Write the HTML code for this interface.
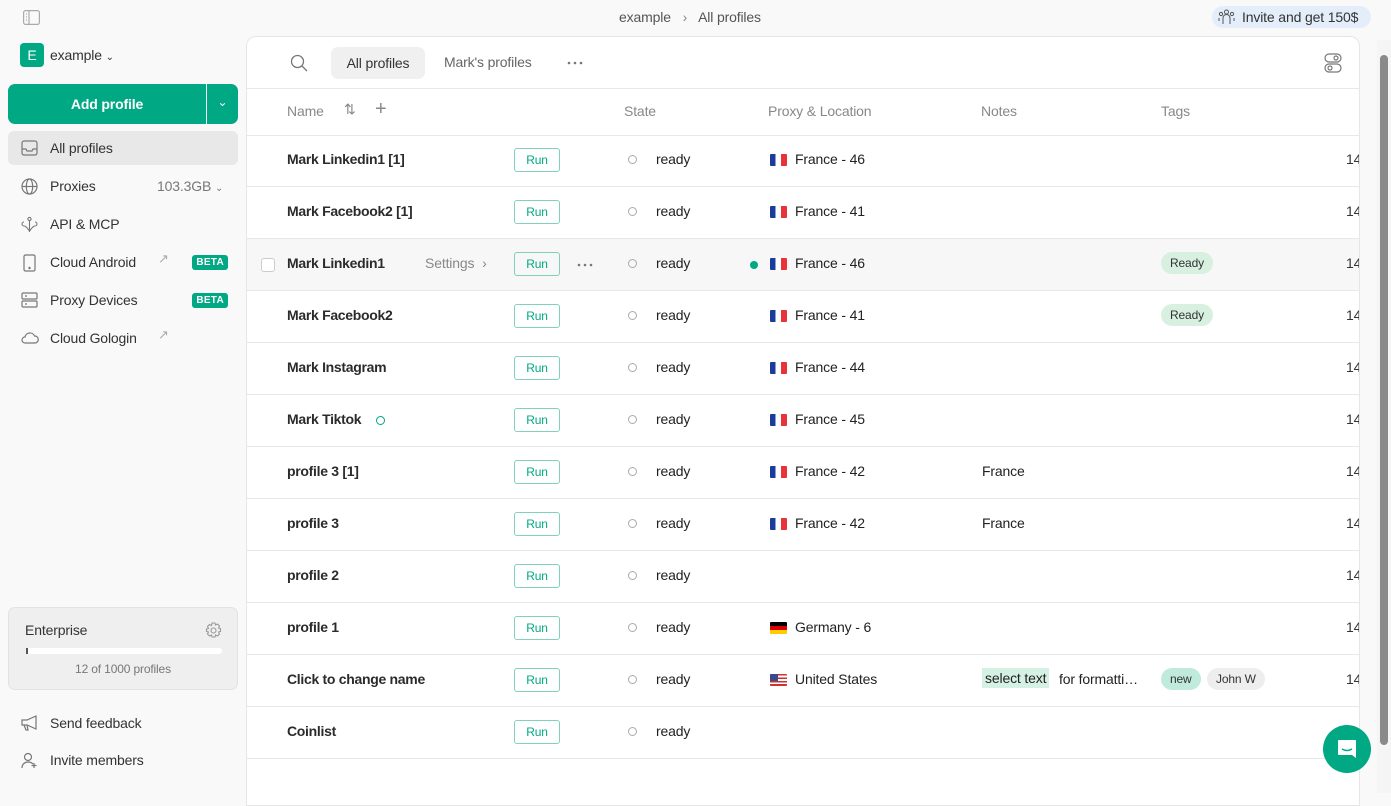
<!DOCTYPE html>
<html><head><meta charset="utf-8"><style>
*{box-sizing:border-box;margin:0;padding:0}
body{width:1391px;height:793px;overflow:hidden;background:#f9f9f9;font-family:"Liberation Sans",sans-serif;color:#222;position:relative;font-size:14px;letter-spacing:-0.15px}
.abs{position:absolute}
.nav{position:absolute;left:8px;width:230px;height:34px;border-radius:6px;display:flex;align-items:center;padding-left:42px;font-size:14px;color:#333}
.nav svg{position:absolute;left:13px;top:9px}
.beta{position:absolute;right:10px;top:10px;background:#00a884;color:#fff;font-size:10px;font-weight:bold;padding:2px 4px;border-radius:3px;letter-spacing:.3px}
.arr{position:absolute;left:150px;top:6px;color:#aaa;font-size:13px}
.panel{position:absolute;left:246px;top:36px;width:1114px;height:770px;background:#fff;border:1px solid #e6e6e6;border-radius:10px 10px 0 0;overflow:hidden}
.row{position:absolute;left:0;width:1114px;height:52px;border-bottom:1px solid #e8e8e8}
.row>*{position:absolute}
.nm{left:40px;top:16px;font-weight:bold;font-size:14px;color:#2b2b2b;letter-spacing:-0.3px}
.run{left:267px;top:13px;width:46px;height:24px;border:1px solid #7fd1bb;border-radius:3px;color:#00a884;font-size:12px;text-align:center;line-height:22px}
.sd{left:381px;top:20px;width:9px;height:9px;border:1px solid #aaa;border-radius:50%}
.rd{left:409px;top:16px}
.fl{left:523px;top:19px;width:17px;height:12px;border-radius:1px;overflow:hidden;display:flex}
.fr{background:linear-gradient(90deg,#1c3c9c 0 33%,#fff 33% 66%,#e8333a 66%)}
.loc{left:548px;top:16px}
.nt{left:735px;top:16px}
.n14{left:1099px;top:16px;color:#333}
.tag{top:13px;height:22px;border-radius:11px;font-size:12px;line-height:22px;padding:0 9px;background:#d8f0e0;color:#333}
</style></head><body>
<svg class="abs" style="left:23px;top:10px" width="17" height="15" viewBox="0 0 17 15" fill="none" stroke="#aaa" stroke-width="1.2"><rect x=".6" y=".6" width="15.8" height="13.8" rx="2"/><path d="M6 1v13M3 4h1M3 7h1M3 10h1"/></svg>
<div class="abs" style="left:619px;top:9px;font-size:14px;color:#555">example <span style="margin:0 8px;color:#888">›</span> All profiles</div>
<div class="abs" style="left:1212px;top:6px;width:159px;height:22px;background:#e4eefa;border-radius:11px;font-size:14px;color:#333;padding:3px 0 0 30px">Invite and get 150$</div>
<svg class="abs" style="left:1218px;top:9px" width="17" height="16" viewBox="0 0 17 16" fill="none" stroke="#555" stroke-width="1"><circle cx="8.5" cy="3" r="2"/><circle cx="3" cy="5" r="1.6"/><circle cx="14" cy="5" r="1.6"/><path d="M5 15v-6a3.5 3.5 0 017 0v6M1 12V9M16 12V9"/></svg>

<div class="abs" style="left:20px;top:43px;width:24px;height:24px;background:#00a884;border-radius:4px;color:#fff;text-align:center;line-height:24px;font-size:14px">E</div>
<div class="abs" style="left:50px;top:47px;font-size:14px;color:#333">example <span style="font-size:10px">⌄</span></div>
<div class="abs" style="left:8px;top:84px;width:198px;height:40px;background:#00a884;border-radius:7px 0 0 7px;color:#fff;font-weight:bold;text-align:center;line-height:40px;font-size:14px">Add profile</div>
<div class="abs" style="left:207px;top:84px;width:31px;height:40px;background:#00a884;border-radius:0 7px 7px 0;color:#fff;text-align:center;line-height:36px;font-size:12px">⌄</div>

<div class="nav" style="top:131px;background:#e8e8e8"><svg width="17" height="16" viewBox="0 0 17 16" fill="none" stroke="#777" stroke-width="1.2"><rect x="1" y="1" width="15" height="14" rx="2"/><path d="M1 9h4l1 2h5l1-2h4"/></svg>All profiles</div>
<div class="nav" style="top:169px"><svg width="17" height="17" viewBox="0 0 17 17" fill="none" stroke="#777" stroke-width="1.2"><circle cx="8.5" cy="8.5" r="7.5"/><ellipse cx="8.5" cy="8.5" rx="3.2" ry="7.5"/><path d="M1 8.5h15"/></svg>Proxies<span style="position:absolute;left:149px;color:#777">103.3GB <span style="font-size:10px">⌄</span></span></div>
<div class="nav" style="top:207px"><svg width="17" height="17" viewBox="0 0 17 17" fill="none" stroke="#777" stroke-width="1.1"><circle cx="8.5" cy="3" r="1.6"/><path d="M8.5 5v11M3 6a2 2 0 100 4c2 0 3 2 5.5 5M14 6a2 2 0 110 4c-2 0-3 2-5.5 5"/></svg>API &amp; MCP</div>
<div class="nav" style="top:245px"><svg width="17" height="18" viewBox="0 0 17 18" fill="none" stroke="#777" stroke-width="1.2"><rect x="3" y="1" width="11" height="16" rx="1.5"/><circle cx="8.5" cy="14" r=".6" fill="#777"/></svg>Cloud Android<span class="arr">↗</span><span class="beta">BETA</span></div>
<div class="nav" style="top:283px"><svg width="17" height="16" viewBox="0 0 17 16" fill="none" stroke="#777" stroke-width="1.2"><rect x="1" y="1" width="15" height="6" rx="1"/><rect x="1" y="9" width="15" height="6" rx="1"/><path d="M4 4h2M4 12h2"/></svg>Proxy Devices<span class="beta">BETA</span></div>
<div class="nav" style="top:321px"><svg width="18" height="16" viewBox="0 0 18 16" fill="none" stroke="#777" stroke-width="1.2"><path d="M4 13a3 3 0 010-6 5 5 0 019.5-1A3.5 3.5 0 0114 13z"/></svg>Cloud Gologin<span class="arr">↗</span></div>

<div class="abs" style="left:8px;top:607px;width:230px;height:83px;background:#efefef;border:1px solid #e2e2e2;border-radius:7px">
<div class="abs" style="left:16px;top:14px;font-size:14px;color:#333">Enterprise</div>
<svg class="abs" style="left:196px;top:14px" width="17" height="17" viewBox="0 0 17 17" fill="none" stroke="#999" stroke-width="1.1"><circle cx="8.5" cy="8.5" r="2.5"/><path d="M7 1h3l.5 2 2-1 2 2-1 2 2 .5v3l-2 .5 1 2-2 2-2-1-.5 2H7l-.5-2-2 1-2-2 1-2-2-.5V7l2-.5-1-2 2-2 2 1z"/></svg>
<div class="abs" style="left:17px;top:40px;width:196px;height:6px;background:#fff;border-radius:3px"><div style="width:2px;height:6px;background:#555"></div></div>
<div class="abs" style="left:0;width:228px;top:54px;text-align:center;font-size:12px;color:#777">12 of 1000 profiles</div>
</div>
<div class="nav" style="top:706px"><svg width="17" height="16" viewBox="0 0 17 16" fill="none" stroke="#777" stroke-width="1.2"><path d="M1 5h5l9-4v13l-9-4H1zM3 10l2 5h2l-1-5"/></svg>Send feedback</div>
<div class="nav" style="top:743px"><svg width="17" height="17" viewBox="0 0 17 17" fill="none" stroke="#777" stroke-width="1.2"><circle cx="7" cy="5" r="3.5"/><path d="M1 16c0-4 3-6 6-6s4 1 5 2M13 11v5M10.5 13.5h5"/></svg>Invite members</div>

<div class="panel">
<svg class="abs" style="left:43px;top:17px" width="18" height="18" viewBox="0 0 18 18" fill="none" stroke="#777" stroke-width="1.3"><circle cx="7.5" cy="7.5" r="6"/><path d="M12 12l5 5"/></svg>
<div class="abs" style="left:84px;top:10px;width:94px;height:32px;background:#f0f0f0;border-radius:7px;text-align:center;line-height:32px;color:#333">All profiles</div>
<div class="abs" style="left:197px;top:17px;color:#666">Mark's profiles</div>
<svg class="abs" style="left:320px;top:24px" width="16" height="4"><circle cx="2" cy="2" r="1.3" fill="#777"/><circle cx="8" cy="2" r="1.3" fill="#777"/><circle cx="14" cy="2" r="1.3" fill="#777"/></svg>
<svg class="abs" style="left:1077px;top:16px" width="18" height="20" viewBox="0 0 18 20" fill="none" stroke="#777" stroke-width="1.2"><rect x="1" y="1" width="16" height="8" rx="4"/><rect x="1" y="11" width="16" height="8" rx="4"/><circle cx="12" cy="5" r="2"/><circle cx="6" cy="15" r="2"/></svg>
<div class="row" style="top:51px;height:48px;border-top:1px solid #e8e8e8;color:#888">
<span style="left:40px;top:14px">Name</span><span style="left:97px;top:12px">⇅</span><span style="left:128px;top:9px;font-size:20px;font-weight:300">+</span>
<span style="left:377px;top:14px">State</span><span style="left:521px;top:14px">Proxy &amp; Location</span><span style="left:734px;top:14px">Notes</span><span style="left:914px;top:14px">Tags</span></div>

<div class="row" style="top:98px"><span class="nm">Mark Linkedin1 [1]</span><span class="run">Run</span><span class="sd"></span><span class="rd">ready</span><span class="fl fr"></span><span class="loc">France - 46</span><span class="n14">14</span></div>
<div class="row" style="top:150px"><span class="nm">Mark Facebook2 [1]</span><span class="run">Run</span><span class="sd"></span><span class="rd">ready</span><span class="fl fr"></span><span class="loc">France - 41</span><span class="n14">14</span></div>
<div class="row" style="top:202px;background:#f7f7f7"><span style="left:14px;top:19px;width:14px;height:14px;border:1px solid #ccc;border-radius:3px;background:#fff"></span><span class="nm">Mark Linkedin1</span><span style="left:178px;top:16px;color:#888">Settings <span style="margin-left:4px">›</span></span><span class="run">Run</span><svg style="left:330px;top:24px" width="16" height="4"><circle cx="2" cy="2" r="1.3" fill="#777"/><circle cx="8" cy="2" r="1.3" fill="#777"/><circle cx="14" cy="2" r="1.3" fill="#777"/></svg><span class="sd"></span><span class="rd">ready</span><span style="left:503px;top:22px;width:8px;height:8px;border-radius:50%;background:#00a884"></span><span class="fl fr"></span><span class="loc">France - 46</span><span class="tag" style="left:914px">Ready</span><span class="n14">14</span></div>
<div class="row" style="top:254px"><span class="nm">Mark Facebook2</span><span class="run">Run</span><span class="sd"></span><span class="rd">ready</span><span class="fl fr"></span><span class="loc">France - 41</span><span class="tag" style="left:914px">Ready</span><span class="n14">14</span></div>
<div class="row" style="top:306px"><span class="nm">Mark Instagram</span><span class="run">Run</span><span class="sd"></span><span class="rd">ready</span><span class="fl fr"></span><span class="loc">France - 44</span><span class="n14">14</span></div>
<div class="row" style="top:358px"><span class="nm">Mark Tiktok</span><span style="left:129px;top:21px;width:9px;height:9px;border:1.5px solid #00a884;border-radius:50%"></span><span class="run">Run</span><span class="sd"></span><span class="rd">ready</span><span class="fl fr"></span><span class="loc">France - 45</span><span class="n14">14</span></div>
<div class="row" style="top:410px"><span class="nm">profile 3 [1]</span><span class="run">Run</span><span class="sd"></span><span class="rd">ready</span><span class="fl fr"></span><span class="loc">France - 42</span><span class="nt">France</span><span class="n14">14</span></div>
<div class="row" style="top:462px"><span class="nm">profile 3</span><span class="run">Run</span><span class="sd"></span><span class="rd">ready</span><span class="fl fr"></span><span class="loc">France - 42</span><span class="nt">France</span><span class="n14">14</span></div>
<div class="row" style="top:514px"><span class="nm">profile 2</span><span class="run">Run</span><span class="sd"></span><span class="rd">ready</span><span class="n14">14</span></div>
<div class="row" style="top:566px"><span class="nm">profile 1</span><span class="run">Run</span><span class="sd"></span><span class="rd">ready</span><span class="fl" style="background:linear-gradient(#000 0 33%,#d00 33% 66%,#fc0 66%)"></span><span class="loc">Germany - 6</span><span class="n14">14</span></div>
<div class="row" style="top:618px"><span class="nm">Click to change name</span><span class="run">Run</span><span class="sd"></span><span class="rd">ready</span><span class="fl" style="background:repeating-linear-gradient(#c33 0 1.7px,#fff 1.7px 3.4px)"><span style="width:8px;height:7px;background:#3b4a8a"></span></span><span class="loc">United States</span><span class="nt" style="top:13px;background:#d5f1e4;padding:2px 3px;left:735px">select text</span><span class="nt" style="left:812px">for formatti…</span><span class="tag" style="left:914px;background:#c0eadb">new</span><span class="tag" style="left:960px;background:#eeeeee">John W</span><span class="n14">14</span></div>
<div class="row" style="top:670px"><span class="nm">Coinlist</span><span class="run">Run</span><span class="sd"></span><span class="rd">ready</span></div>
</div>
<div class="abs" style="left:1377px;top:40px;width:14px;height:753px;background:#f5f5f5"></div>
<div class="abs" style="left:1380px;top:55px;width:8px;height:690px;background:#8a8a8a;border-radius:4px"></div>
<div class="abs" style="left:1323px;top:725px;width:48px;height:48px;border-radius:50%;background:#00a884"></div>
<svg class="abs" style="left:1335px;top:737px" width="24" height="24" viewBox="0 0 24 24"><path d="M4 3h16a1 1 0 011 1v17l-4-3H4a1 1 0 01-1-1V4a1 1 0 011-1z" fill="#fff"/><path d="M7 12q5 3 10 0" stroke="#00a884" stroke-width="1.5" fill="none"/></svg>
</body></html>
